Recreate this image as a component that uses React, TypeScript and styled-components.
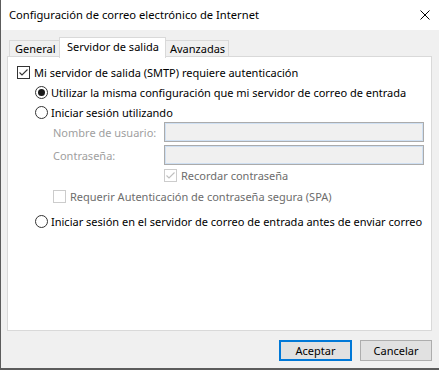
import React from 'react';
import styled, { createGlobalStyle } from 'styled-components';

const GlobalStyle = createGlobalStyle`
    html, body {
        margin: 0;
        padding: 0;
        background: #f0f0f0;
    }
    body {
        font-family: 'Noto Sans', 'Liberation Sans', sans-serif;
        font-size: 11px;
        color: #000;
    }
`;

const Window = styled.div`
    width: 439px;
    height: 370px;
    box-sizing: border-box;
    border-left: 1px solid #5c5c5c;
    border-bottom: 2px solid #5c5c5c;
    background: #f0f0f0;
    display: flex;
    flex-direction: column;
    overflow: hidden;
`;

const TitleBar = styled.div`
    height: 30px;
    background: #fff;
    display: flex;
    align-items: center;
    justify-content: space-between;
    padding: 0 9px 0 8px;
    flex-shrink: 0;
`;

const Title = styled.span`
    font-size: 11.2px;
    color: #000;
    margin-top: -1px;
`;

const Body = styled.div`
    flex: 1;
    display: flex;
    flex-direction: column;
    padding: 7px 0 0 6px;
`;

const TabRow = styled.div`
    display: flex;
    align-items: flex-end;
    margin-left: 2px;
    position: relative;
    z-index: 1;
`;

const Tab = styled.div<{ $active?: boolean; $w: number; $pad: number }>`
    box-sizing: border-box;
    width: ${(p) => p.$w}px;
    height: ${(p) => (p.$active ? '21px' : '17px')};
    padding: ${(p) => (p.$active ? `0 0 3px ${p.$pad}px` : `0 0 0 ${p.$pad}px`)};
    margin-bottom: ${(p) => (p.$active ? '-1px' : '0')};
    background: ${(p) => (p.$active ? '#fff' : '#f0f0f0')};
    border: 1px solid #d9d9d9;
    border-bottom: ${(p) => (p.$active ? 'none' : '1px solid #d9d9d9')};
    display: flex;
    align-items: center;
    white-space: nowrap;
    position: relative;
    z-index: ${(p) => (p.$active ? 2 : 1)};

    & + & {
        margin-left: -1px;
    }
`;

const Panel = styled.div`
    box-sizing: border-box;
    width: 425px;
    height: 275px;
    background: #fff;
    border: 1px solid #d9d9d9;
    margin-top: -1px;
    padding: 5px 0 0 9px;
    display: flex;
    flex-direction: column;
`;

const Row = styled.div<{ $indent?: number; $gap?: number; $h?: number }>`
    display: flex;
    align-items: center;
    height: ${(p) => p.$h ?? 20}px;
    margin-left: ${(p) => p.$indent ?? 0}px;
    margin-top: ${(p) => p.$gap ?? 0}px;
`;

const Label = styled.span<{ $disabled?: boolean; $faint?: boolean }>`
    color: ${(p) => (p.$faint ? '#a0a0a0' : p.$disabled ? '#6d6d6d' : '#000')};
    white-space: nowrap;
`;

const FieldLabel = styled(Label)`
    width: 111px;
    flex-shrink: 0;
`;

const Box = styled.span<{ $disabled?: boolean }>`
    box-sizing: border-box;
    width: 13px;
    height: 13px;
    flex-shrink: 0;
    border: 1px solid ${(p) => (p.$disabled ? '#cccccc' : '#333333')};
    background: #fff;
    display: flex;
    align-items: center;
    justify-content: center;
    margin-right: 4px;
`;

const Radio = styled.span<{ $checked?: boolean }>`
    box-sizing: border-box;
    width: 13px;
    height: 13px;
    flex-shrink: 0;
    border-radius: 50%;
    border: 1px solid #333;
    background: #fff;
    display: flex;
    align-items: center;
    justify-content: center;
    margin-right: 3px;

    &::after {
        content: '';
        display: ${(p) => (p.$checked ? 'block' : 'none')};
        width: 7px;
        height: 7px;
        border-radius: 50%;
        background: #1a1a1a;
    }
`;

const TextBox = styled.div`
    box-sizing: border-box;
    width: 260px;
    height: 20px;
    border: 1px solid #ababab;
    box-shadow: inset 0 0 0 1px #cfe0f3;
    background: #f0f0f0;
`;

const ButtonRow = styled.div`
    display: flex;
    justify-content: flex-end;
    gap: 8px;
    margin-top: 9px;
    width: 425px;
`;

const Button = styled.button<{ $primary?: boolean }>`
    box-sizing: border-box;
    width: ${(p) => (p.$primary ? '73px' : '72px')};
    height: 21px;
    background: #e1e1e1;
    border: ${(p) => (p.$primary ? '2px solid #0078d7' : '1px solid #adadad')};
    font-family: inherit;
    font-size: 11px;
    color: #000;
    padding: 0;
    display: flex;
    align-items: center;
    justify-content: center;
`;

const Check = ({ color }: { color: string }) => (
    <svg width="11" height="11" viewBox="0 0 11 11">
        <path d="M1.5 5.5 L4 8 L9.5 2.5" fill="none" stroke={color} strokeWidth="1.1" />
    </svg>
);

const CloseIcon = () => (
    <svg width="10" height="10" viewBox="0 0 10 10">
        <path d="M0.5 0.5 L9.5 9.5 M9.5 0.5 L0.5 9.5" stroke="#000" strokeWidth="1" />
    </svg>
);

const App: React.FC = () => {
    return (
        <>
            <GlobalStyle />
            <Window>
                <TitleBar>
                    <Title>Configuración de correo electrónico de Internet</Title>
                    <CloseIcon />
                </TitleBar>
                <Body>
                    <TabRow>
                        <Tab $w={51} $pad={5}>General</Tab>
                        <Tab $active $w={107} $pad={7}>Servidor de salida</Tab>
                        <Tab $w={64} $pad={4}>Avanzadas</Tab>
                    </TabRow>
                    <Panel>
                        <Row>
                            <Box>
                                <Check color="#333" />
                            </Box>
                            <Label>Mi servidor de salida (SMTP) requiere autenticación</Label>
                        </Row>
                        <Row $indent={18}>
                            <Radio $checked />
                            <Label>Utilizar la misma configuración que mi servidor de correo de entrada</Label>
                        </Row>
                        <Row $indent={18}>
                            <Radio />
                            <Label>Iniciar sesión utilizando</Label>
                        </Row>
                        <Row $indent={36}>
                            <FieldLabel $faint>Nombre de usuario:</FieldLabel>
                            <TextBox />
                        </Row>
                        <Row $indent={36} $gap={3}>
                            <FieldLabel $faint>Contraseña:</FieldLabel>
                            <TextBox />
                        </Row>
                        <Row $indent={147} $gap={1} $h={19}>
                            <Box $disabled>
                                <Check color="#bfbfbf" />
                            </Box>
                            <Label $disabled>Recordar contraseña</Label>
                        </Row>
                        <Row $indent={36} $gap={1} $h={20}>
                            <Box $disabled />
                            <Label $disabled>Requerir Autenticación de contraseña segura (SPA)</Label>
                        </Row>
                        <Row $indent={18} $gap={5}>
                            <Radio />
                            <Label>Iniciar sesión en el servidor de correo de entrada antes de enviar correo</Label>
                        </Row>
                    </Panel>
                    <ButtonRow>
                        <Button $primary>Aceptar</Button>
                        <Button>Cancelar</Button>
                    </ButtonRow>
                </Body>
            </Window>
        </>
    );
};

export default App;
